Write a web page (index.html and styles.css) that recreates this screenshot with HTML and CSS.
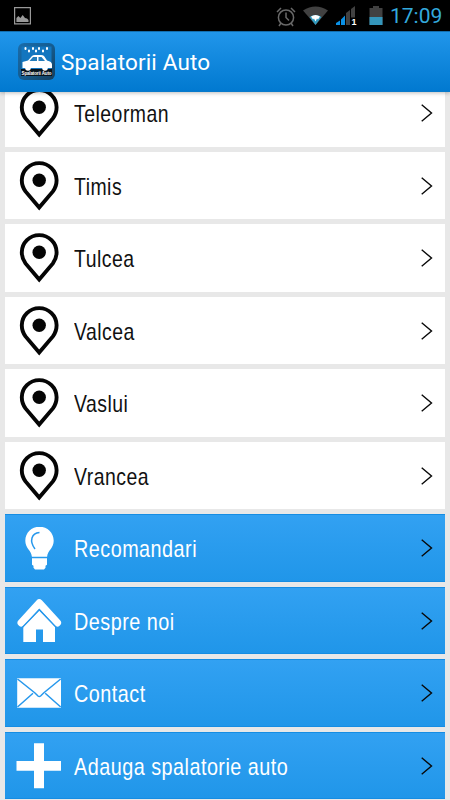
FILE: index.html
```html
<!DOCTYPE html>
<html lang="ro">
<head>
<meta charset="utf-8">
<title>Spalatorii Auto</title>
<link rel="stylesheet" href="styles.css">
</head>
<body>
<svg class="defs" width="0" height="0" aria-hidden="true">
  <symbol id="pin" viewBox="0 0 60 67.5"><path d="M34.2 55.600 20.500 39.400C18 36 16.800 32.500 16.800 28.300a17.400 17.200 0 0 1 34.800 0c0 4.200-1.200 7.700-3.700 11.100z" fill="none" stroke="#050505" stroke-width="3.900"/><circle cx="34.200" cy="28.300" r="6.700" fill="#050505"/></symbol>
  <symbol id="go" viewBox="0 0 12 18"><path d="M.7.8 10.500 9 .7 17.200" fill="none" stroke="#080808" stroke-width="1.400"/></symbol>
</svg>
<div class="screen">
  <div class="status">
    <svg class="picture" width="17" height="18" viewBox="0 0 17 18"><path d="M.6.6h15.800v16.200H.6z" fill="none" stroke="#999" stroke-width="1.200"/><path d="M2.400 15v-4l2-2 2 2 2.300-3 2.300 3 2 .5 1.500 1.500v2z" fill="#999"/></svg>
    <svg class="signals" width="112" height="24" viewBox="0 0 112 24">
      <g fill="none" stroke="#696969" stroke-width="1.500"><circle cx="11" cy="12.500" r="7.600"/><path d="M11 7.500v5l3 3M2 7l4-4M20 7l-4-4M6 18l-2 3M16 18l2 3"/></g>
      <path d="M28 5.500q12.500-8 25 0L40.500 20z" fill="#414141"/><path d="M34.500 12q6-4 12 0l-6 8z" fill="#319bc0"/><path d="M36 11.500q4.500-3 9 0l-2 3-1-1-1.500 3-1.500-3-1 1z" fill="#fff"/>
      <path d="M61 20v-2l4-2.500V20zM66 20v-5.500l4-4V20z" fill="#0a90e5"/><path d="M71 20V8l4-3v15zM76 20V4l4-3v19z" fill="#414141"/>
      <path d="M75.500 12.500H82V20h-6.500z" fill="#000"/>
      <text x="76.500" y="20" class="sim">1</text>
      <path d="M98 1h6v2h3.500v17h-13V3H98z" fill="#414141"/><path d="M94.500 12h13v8h-13z" fill="#3496bb"/>
    </svg>
    <span class="clock">17:09</span>
  </div>
  <header class="bar">
    <svg class="logo" width="37" height="37" viewBox="0 0 37 37">
      <defs><linearGradient id="shade" x1="0" y1="0" x2="1" y2="1"><stop offset="0" stop-color="#1a6dac"/><stop offset=".5" stop-color="#145c90"/><stop offset="1" stop-color="#143d5b"/></linearGradient></defs>
      <rect width="37" height="37" rx="6" fill="url(#shade)"/><path d="M3.500 3.500h30v23h-30z" fill="#1376bf"/>
      <path d="M3 26h31v7H3z" fill="#07131d"/>
      <path d="M7.500 5v1M11 7.500v1M15 5v1M18 7.500v1M21 5v1M25 7.500v1M29 5v1" stroke="#fff" stroke-width="2" stroke-linecap="round"/>
      <path d="M4.500 25v-6l5.500-1.500 4-4.500q1-1 3-1h6q2 0 3 1l3 4.500q5 1 5 4V25z" fill="#fff"/><path d="m11.500 18 3.500-4h4v4zM20.500 14h3l3.500 4h-6.500z" fill="#247dbb"/><circle cx="10" cy="25" r="2.800" fill="#fff"/><circle cx="27" cy="25" r="2.800" fill="#fff"/>
      <text x="3.500" y="32" class="logo-text" textLength="30">Spalatorii Auto</text>
    </svg>
    <h1>Spalatorii Auto</h1>
  </header>
  <main class="viewport">
    <ul class="list">
      <li class="row"><svg class="icon"><use href="#pin"/></svg><span class="label">Teleorman</span><svg class="go"><use href="#go"/></svg></li>
      <li class="row"><svg class="icon"><use href="#pin"/></svg><span class="label">Timis</span><svg class="go"><use href="#go"/></svg></li>
      <li class="row"><svg class="icon"><use href="#pin"/></svg><span class="label">Tulcea</span><svg class="go"><use href="#go"/></svg></li>
      <li class="row"><svg class="icon"><use href="#pin"/></svg><span class="label">Valcea</span><svg class="go"><use href="#go"/></svg></li>
      <li class="row"><svg class="icon"><use href="#pin"/></svg><span class="label">Vaslui</span><svg class="go"><use href="#go"/></svg></li>
      <li class="row"><svg class="icon"><use href="#pin"/></svg><span class="label">Vrancea</span><svg class="go"><use href="#go"/></svg></li>
      <li class="row blue"><svg class="icon" viewBox="0 0 60 67.5"><path d="M34.500 12.800c-8 0-14.200 6-14.200 14 0 7.500 6 9.500 6.600 16h15.200c.6-6.500 6.600-8.500 6.600-16 0-8-6.200-14-14.200-14z" fill="#fff"/><path d="M27 44.300h15v6.500l-1.500 1v2l-1.500 1.700h-9l-1.500-1.700v-2l-1.500-1z" fill="#fff"/><path d="M34.500 18.600c-8 .5-10.500 8.500-4.500 16.400" fill="none" stroke="#2798ec" stroke-width="1.500"/></svg><span class="label">Recomandari</span><svg class="go"><use href="#go"/></svg></li>
      <li class="row blue"><svg class="icon" viewBox="0 0 60 67.5"><path d="M16.300 35.800 34.300 16l18 19.800" fill="none" stroke="#fff" stroke-width="7.500" stroke-linecap="round" stroke-linejoin="round"/><path d="M34.300 23.500 50 39.800V55H38V42.500h-7V55H18.300V39.800z" fill="#fff"/><path d="m17.500 40.300 16.800-17.500 16.800 17.500" fill="none" stroke="#2798ec" stroke-width="1.300"/></svg><span class="label">Despre noi</span><svg class="go"><use href="#go"/></svg></li>
      <li class="row blue"><svg class="icon" viewBox="0 0 60 67.5"><path d="M12.200 19.200H56v29.600H12.200z" fill="#fff"/><path d="m12.500 20 17.500 14 3 3q1.300 1 2.600 0l3-3L55.700 20M12.500 48 28 34.200M55.700 48 40.200 34.200" fill="none" stroke="#2798ec" stroke-width="1.500"/></svg><span class="label">Contact</span><svg class="go"><use href="#go"/></svg></li>
      <li class="row blue"><svg class="icon" viewBox="0 0 60 67.5"><path d="M29 11.300h10v17.800h17v9.700H39v17.500H29V38.800H11.500v-9.700H29z" fill="#fff"/></svg><span class="label">Adauga spalatorie auto</span><svg class="go"><use href="#go"/></svg></li>
    </ul>
  </main>
</div>
</body>
</html>
```
FILE: styles.css
```css
* { box-sizing: border-box; }
body { margin: 0; background: #e8e8e8; }
.defs { position: absolute; }
.screen { width: 450px; height: 800px; overflow: hidden; display: flex; flex-direction: column; }
.status { height: 31px; flex: none; background: #000; display: flex; align-items: flex-start; }
.picture { margin: 7px 0 0 14px; }
.signals { margin: 5px 0 0 244px; }
.sim { font: bold 9px "Liberation Sans", sans-serif; fill: #fff; }
.clock { margin: 4px 0 0 3px; font: 21px/25px Roboto, sans-serif; color: #33a9dc; white-space: nowrap; }
.bar { height: 61px; flex: none; display: flex; align-items: center; padding-left: 17.500px; background: linear-gradient(#2196ea, #0179d0); border-top: 1px solid #126eaf; border-bottom: 1px solid #077acb; box-shadow: 0 1px 4px #0004; z-index: 1; }
.logo { flex: none; }
.logo-text { font: bold 4.500px "Liberation Sans", sans-serif; fill: #fff; }
h1 { margin: 0 0 0 6.500px; font: 22.500px/30px Roboto, sans-serif; color: #fff; white-space: nowrap; letter-spacing: .15px; }
.viewport { flex: 1; overflow: hidden; }
.list { list-style: none; margin: -12.700px 0 0; padding: 0 5px; display: grid; gap: 5px; }
.row { height: 67.500px; display: flex; align-items: center; background: #fff; color: #111; }
.blue { background: linear-gradient(#32a1f2, #2096e9); color: #fff; border-top: 1px solid #168de3; border-bottom: 1px solid #168de3; }
.icon { width: 60px; height: 67.500px; flex: none; }
.label { margin-left: 9px; flex: 1; font: 24px/30px "Liberation Sans", sans-serif; letter-spacing: .6px; white-space: nowrap; transform: scaleX(.81); transform-origin: left; padding-top: 2px; }
.blue .label { transform: scaleX(.824); }
.go { width: 12px; height: 18px; flex: none; margin-right: 12.500px; }
```
